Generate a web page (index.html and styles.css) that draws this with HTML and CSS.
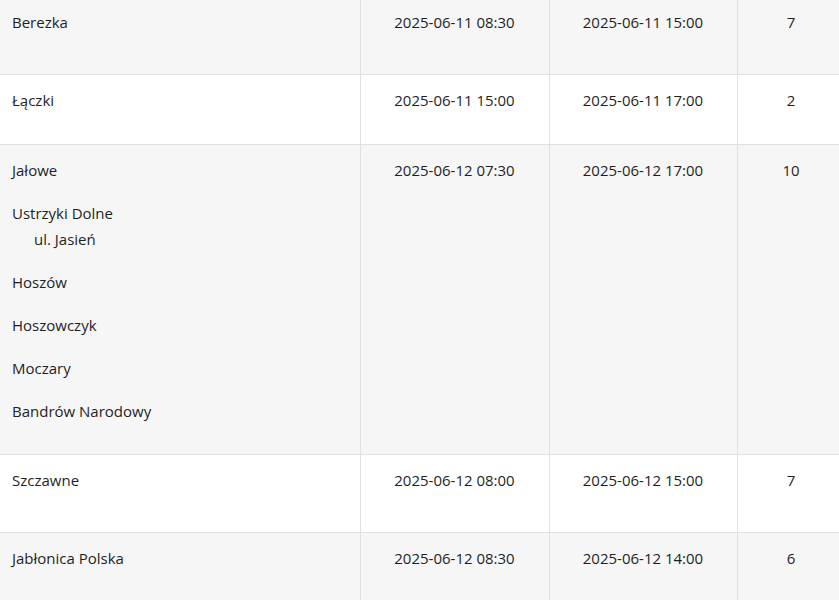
FILE: index.html
```html
<!DOCTYPE html>
<html lang="pl">
<head>
<meta charset="utf-8">
<title>Harmonogram</title>
<link rel="stylesheet" href="styles.css">
</head>
<body>
<table class="schedule">
  <colgroup>
    <col class="c-place">
    <col class="c-time">
    <col class="c-time2">
    <col class="c-num">
  </colgroup>
  <tbody>
    <tr class="shade first">
      <td class="place"><div class="stop">Berezka</div></td>
      <td class="mid"><div class="stop">2025-06-11 08:30</div></td>
      <td class="mid"><div class="stop">2025-06-11 15:00</div></td>
      <td class="mid"><div class="stop">7</div></td>
    </tr>
    <tr>
      <td class="place"><div class="stop">Łączki</div></td>
      <td class="mid"><div class="stop">2025-06-11 15:00</div></td>
      <td class="mid"><div class="stop">2025-06-11 17:00</div></td>
      <td class="mid"><div class="stop">2</div></td>
    </tr>
    <tr class="shade multi">
      <td class="place">
        <div class="stop">Jałowe</div>
        <div class="stop">Ustrzyki Dolne<br><span class="sub">ul. Jasień</span></div>
        <div class="stop">Hoszów</div>
        <div class="stop">Hoszowczyk</div>
        <div class="stop">Moczary</div>
        <div class="stop">Bandrów Narodowy</div>
      </td>
      <td class="mid"><div class="stop">2025-06-12 07:30</div></td>
      <td class="mid"><div class="stop">2025-06-12 17:00</div></td>
      <td class="mid"><div class="stop">10</div></td>
    </tr>
    <tr class="tall">
      <td class="place"><div class="stop">Szczawne</div></td>
      <td class="mid"><div class="stop">2025-06-12 08:00</div></td>
      <td class="mid"><div class="stop">2025-06-12 15:00</div></td>
      <td class="mid"><div class="stop">7</div></td>
    </tr>
    <tr class="shade tall">
      <td class="place"><div class="stop">Jabłonica Polska</div></td>
      <td class="mid"><div class="stop">2025-06-12 08:30</div></td>
      <td class="mid"><div class="stop">2025-06-12 14:00</div></td>
      <td class="mid"><div class="stop">6</div></td>
    </tr>
  </tbody>
</table>
</body>
</html>
```
FILE: styles.css
```css
html, body {
  margin: 0;
  padding: 0;
  background: #ffffff;
  overflow: hidden;
}

body {
  font-family: "Open Sans", "Noto Sans", sans-serif;
  font-size: 15px;
  color: #1f1f1f;
}

.schedule {
  border-collapse: collapse;
  table-layout: fixed;
  width: 845px;
  margin-top: -4px;
}

.c-place { width: 360px; }
.c-time { width: 189px; }
.c-time2 { width: 188px; }
.c-num { width: 108px; }

.schedule td {
  vertical-align: top;
  padding: 12px 12px 14px 12px;
  border: 1px solid #e0e0e0;
}

.schedule tr:first-child td {
  border-top: none;
}

.schedule td:first-child {
  border-left: none;
}

.shade td {
  background: #f6f6f6;
}

.tall td {
  padding-bottom: 22px;
}

.first td {
  padding-top: 13px;
  padding-bottom: 22px;
}

.multi td {
  padding-bottom: 13px;
}

.mid {
  text-align: center;
}

.stop {
  line-height: 26px;
  margin-bottom: 17px;
}

.sub {
  display: inline-block;
  padding-left: 22px;
}
```
